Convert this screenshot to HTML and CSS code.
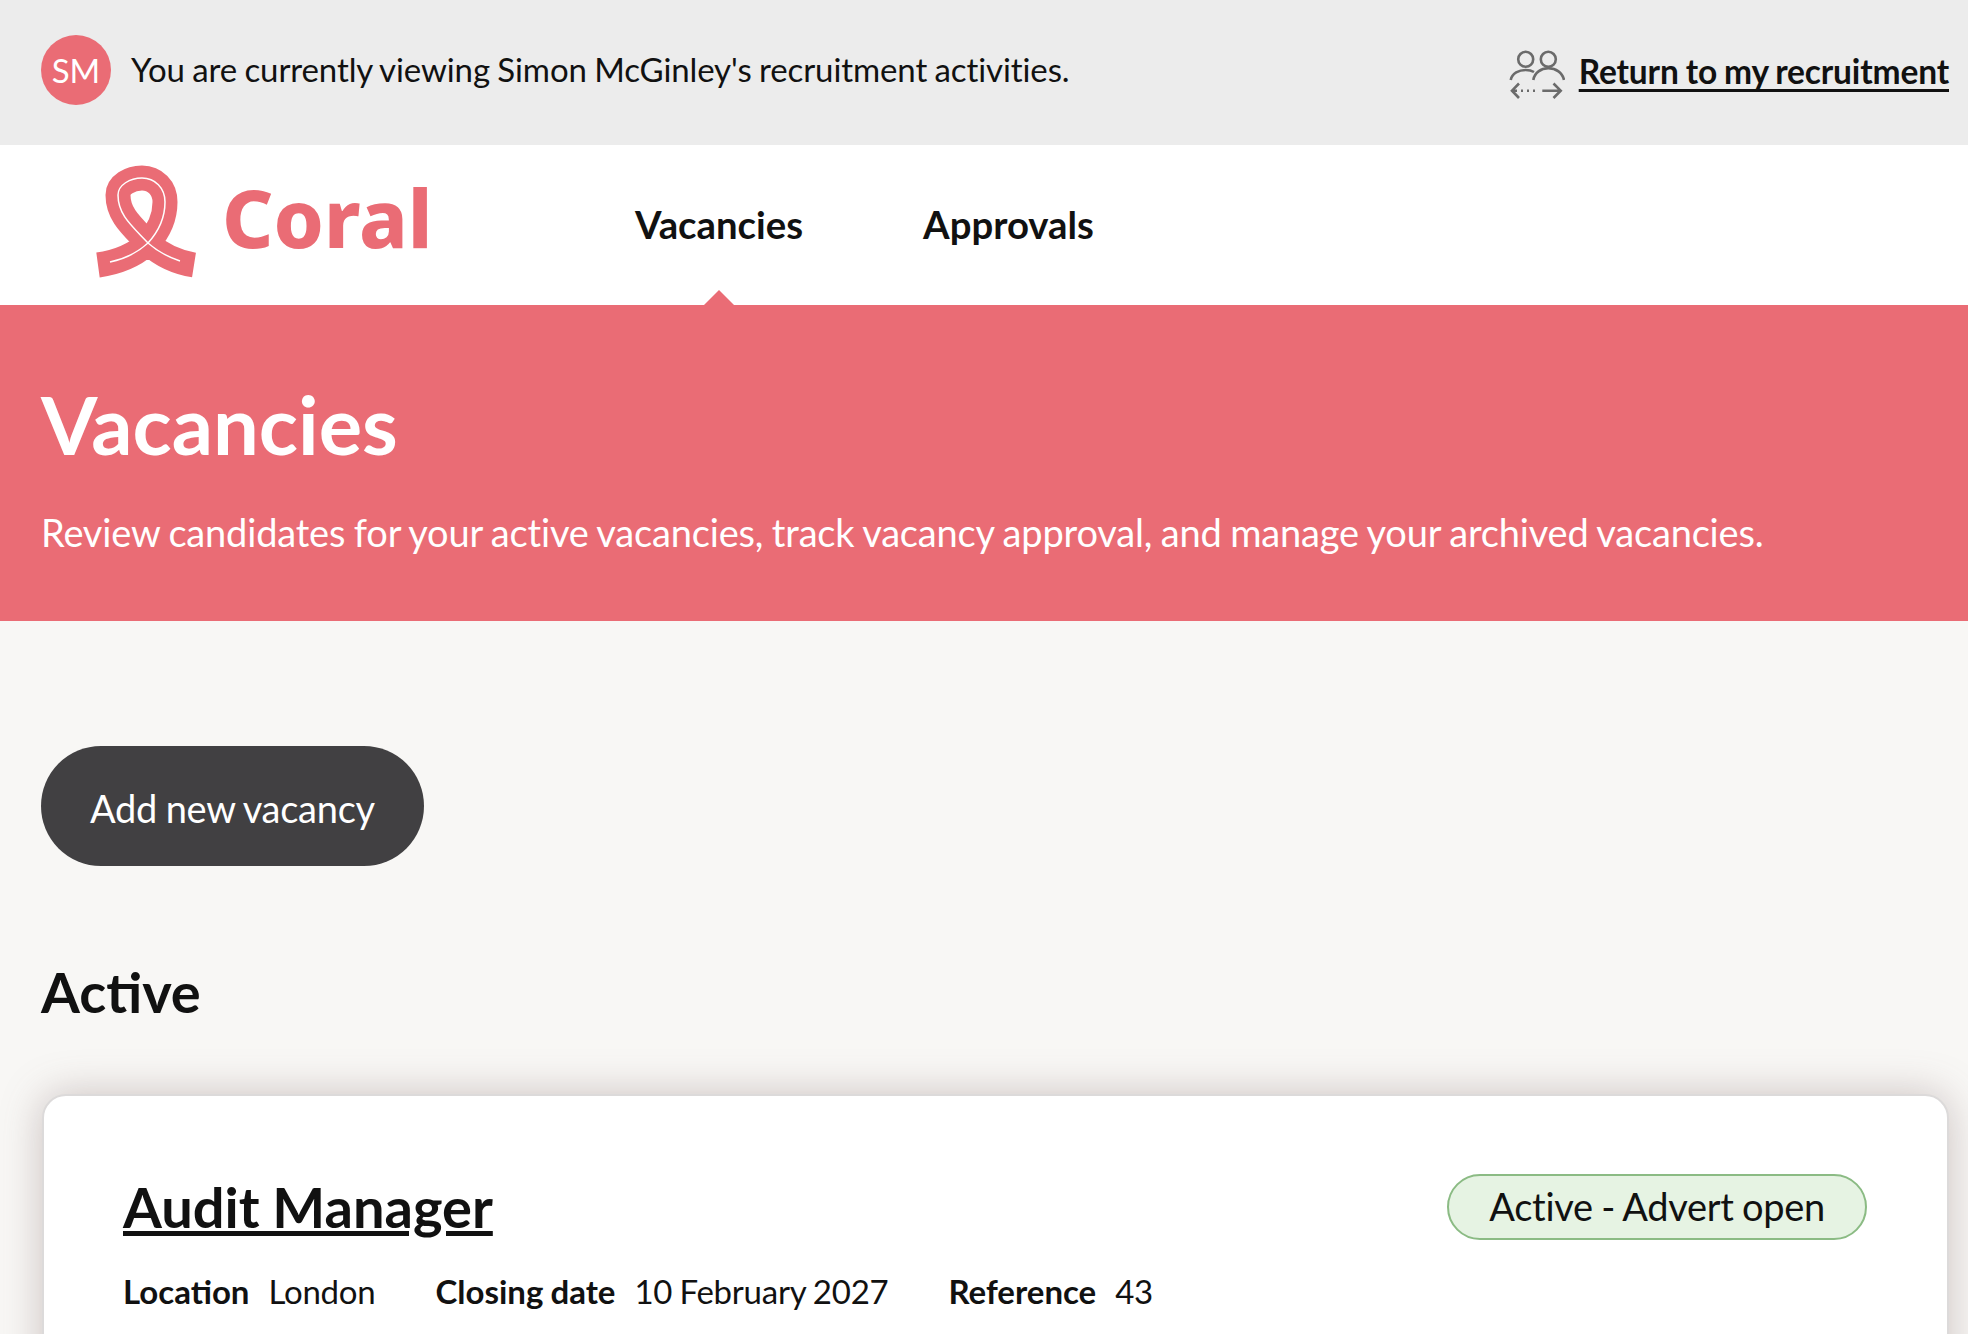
FILE: index.html
```html
<!DOCTYPE html>
<html>
<head>
    <title>Coral - Vacancies</title>
    <link rel="stylesheet" href="styles.css">
</head>
<body>
    <!-- Delegate banner -->
    <div class="viewing-bar">
        <div class="viewing-info">
            <span class="avatar">SM</span>
            <span class="viewing-text">You are currently viewing Simon McGinley's recruitment activities.</span>
        </div>
        <div class="return-link">
            <svg class="people-icon" viewBox="0 0 56 50" width="56" height="50">
                <circle cx="16.7" cy="9.3" r="7.5"/>
                <circle cx="39.3" cy="9.3" r="7.5"/>
                <path d="M1.7 30C3 23 10 20 16.7 20C19.5 20 23 20.800 25 22"/>
                <path d="M24.300 30C25.500 22.500 32 18.300 39.300 18.300C47 18.300 53.500 22.500 55 30"/>
                <path d="M10 33.500L3 40.700L10 48M3 40.700H8"/>
                <path d="M33.300 40.700H51.700M44.500 33.500L51.700 40.700L44.500 48"/>
                <path class="dots" d="M12 40.700H28"/>
            </svg>
            <a href="#">Return to my recruitment</a>
        </div>
    </div>

    <!-- Main nav -->
    <nav class="main-nav">
        <a class="logo" href="#">
            <svg class="ribbon" viewBox="95 165 103 113" width="103" height="113">
                <path class="ribbon-band" d="M98 265C120 262 135 255 148 243C132 226 118 215 118 195C118 185 130 178 142 178C155 178 165 188 165 202C165 218 158 232 148 243C160 254 175 262 194 265"/>
                <path class="ribbon-line" d="M110 262C125 259 137 253 148 243C132 226 118 215 118 195C118 185 130 178 142 178C155 178 165 188 165 202C165 218 158 232 148 243C157 251 168 257 180 261"/>
            </svg>
            <span class="logo-text">Coral</span>
        </a>
        <ul>
            <li class="active"><a href="#">Vacancies</a></li>
            <li><a href="#">Approvals</a></li>
        </ul>
    </nav>

    <!-- Page title -->
    <header class="hero">
        <h1>Vacancies</h1>
        <p>Review candidates for your active vacancies, track vacancy approval, and manage your archived vacancies.</p>
    </header>

    <main class="content">
        <a class="add-button" href="#">Add new vacancy</a>
        <h2>Active</h2>

        <div class="card">
            <div class="card-top">
                <a class="card-title" href="#">Audit Manager</a>
                <span class="badge">Active - Advert open</span>
            </div>
            <dl class="details">
                <div><dt>Location</dt><dd>London</dd></div>
                <div><dt>Closing date</dt><dd>10 February 2027</dd></div>
                <div><dt>Reference</dt><dd>43</dd></div>
            </dl>
        </div>
    </main>
</body>
</html>
```

FILE: styles.css
```css
/* Reset some default styles */
html, body {
    height: 100%;
    overflow: hidden;
}

body {
    margin: 0;
    padding: 0;
    font-family: Lato, "Open Sans", sans-serif;
    word-spacing: -0.06em;
    background-color: #f8f7f5;
    color: #111;
}

/* Delegate banner */
.viewing-bar {
    background-color: #ececec;
    height: 145px;
    padding: 35px 19px 0 41px;
    box-sizing: border-box;
    display: flex;
    justify-content: space-between;
    align-items: flex-start;
}

.viewing-info {
    display: flex;
    align-items: center;
    gap: 20px;
    font-size: 33px;
}

.viewing-text {
    margin-bottom: 3px;
    letter-spacing: -0.1px;
}

.avatar {
    width: 70px;
    height: 70px;
    border-radius: 50%;
    background-color: #ea6c75;
    color: #fff;
    display: flex;
    align-items: center;
    justify-content: center;
    font-size: 33px;
}

.return-link {
    display: flex;
    align-items: center;
    gap: 14px;
    margin-top: 15px;
    height: 50px;
}

.return-link a {
    color: #111;
    font-size: 33.5px;
    font-weight: 700;
    letter-spacing: -0.15px;
    margin-bottom: 8px;
    text-decoration-thickness: 3px;
    text-underline-offset: 5px;
    text-decoration-skip-ink: none;
}

.people-icon {
    fill: none;
    stroke: #6b6b6b;
    stroke-width: 2.6;
}

.people-icon .dots {
    stroke-dasharray: 2 4;
}

/* Main nav */
.main-nav {
    background-color: #fff;
    height: 160px;
    display: flex;
    align-items: flex-start;
}

.logo {
    display: flex;
    align-items: flex-start;
    width: 635px;
    padding: 20px 0 0 95px;
    box-sizing: border-box;
    text-decoration: none;
}

.ribbon {
    fill: none;
    flex-shrink: 0;
}

.ribbon-band {
    stroke: #ea6c75;
    stroke-width: 25;
}

.ribbon-line {
    stroke: #fff;
    stroke-width: 1.5;
}

.logo-text {
    font-family: "Noto Sans", sans-serif;
    font-weight: 800;
    font-size: 80px;
    line-height: 100px;
    color: #ea6c75;
    margin-left: 24px;
    margin-top: 2px;
}

.main-nav ul {
    list-style-type: none;
    margin: 0;
    padding: 0;
    display: flex;
    gap: 120px;
}

.main-nav li {
    position: relative;
    height: 160px;
    line-height: 158px;
}

.main-nav li a {
    text-decoration: none;
    color: #111;
    font-size: 38.3px;
    font-weight: 700;
}

/* Little arrow under the current page */
.main-nav li.active::after {
    content: "";
    position: absolute;
    left: 50%;
    bottom: 0;
    margin-left: -15px;
    border-left: 15px solid transparent;
    border-right: 15px solid transparent;
    border-bottom: 15px solid #ea6c75;
}

/* Page title */
.hero {
    background-color: #ea6c75;
    height: 316px;
    padding: 71px 41px 0;
    box-sizing: border-box;
    color: #fff;
}

.hero h1 {
    margin: 0;
    font-size: 81.3px;
    font-weight: 700;
    line-height: 96px;
}

.hero p {
    margin: 35px 0 0;
    font-size: 38px;
    letter-spacing: -0.18px;
    line-height: 50px;
}

/* Content */
.content {
    padding: 125px 19px 0 41px;
}

.add-button {
    display: inline-block;
    background-color: #414042;
    color: #fff;
    height: 120px;
    line-height: 124px;
    padding: 0 49px;
    border-radius: 60px;
    font-size: 38px;
    letter-spacing: -0.25px;
    text-decoration: none;
}

.content h2 {
    margin: 92px 0 0;
    font-size: 56px;
    font-weight: 700;
    line-height: 68px;
}

.card {
    margin: 68px 0 0 1px;
    background-color: #fff;
    border: 2px solid #dcdada;
    border-radius: 24px;
    padding: 78px 80px 80px 79px;
    box-shadow: 0 0 40px rgba(120, 95, 95, 0.35);
}

.card-top {
    display: flex;
    justify-content: space-between;
    align-items: flex-start;
}

.card-title {
    color: #111;
    font-size: 56px;
    font-weight: 700;
    line-height: 68px;
    margin-top: -1px;
}

.badge {
    background-color: #e6f3e3;
    border: 2px solid #8bbb84;
    border-radius: 33px;
    height: 66px;
    line-height: 60px;
    box-sizing: border-box;
    padding: 0 40px;
    font-size: 38px;
    letter-spacing: -0.3px;
}

.details {
    display: flex;
    gap: 60px;
    margin: 30px 0 0;
    font-size: 33px;
}

.details div {
    display: flex;
    gap: 19px;
}

.details dt {
    font-weight: 700;
}

.details dd {
    margin: 0;
    letter-spacing: -0.25px;
}
```
